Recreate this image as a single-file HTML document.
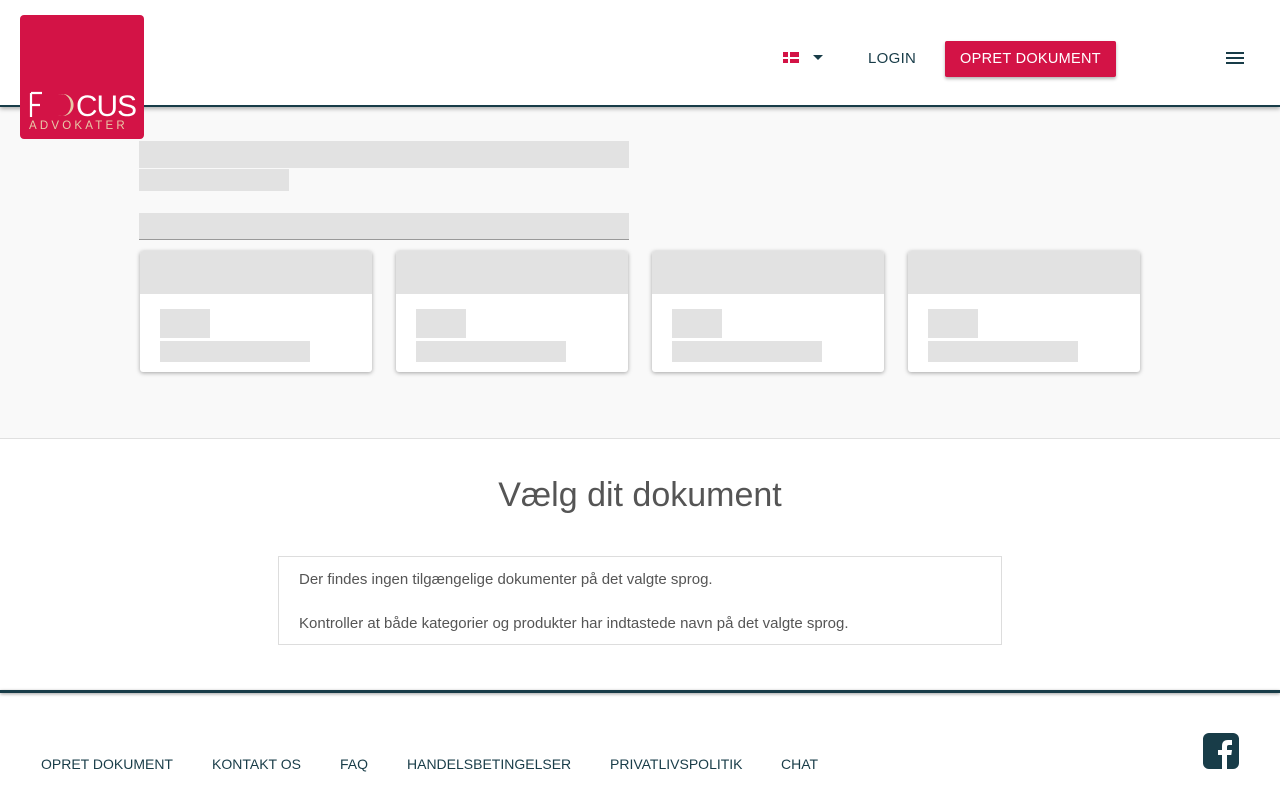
<!DOCTYPE html>
<html><head><meta charset="utf-8"><style>
*{margin:0;padding:0;box-sizing:border-box}
body{width:1280px;height:800px;overflow:hidden;background:#fff;font-family:"Liberation Sans",sans-serif;position:relative}
.hdr{position:absolute;left:0;top:0;width:1280px;height:107px;background:#fff;border-bottom:2px solid #183c48;box-shadow:0 2px 4px rgba(0,0,0,.3);z-index:2}
.logo{position:absolute;left:20px;top:15px;width:124px;height:124px;background:#d31346;border-radius:4px;z-index:3}
.logo .a{position:absolute;left:9px;top:106px;font-size:11.5px;color:#e8c9a8;letter-spacing:3.2px;line-height:1}
.gray{position:absolute;left:0;top:107px;width:1280px;height:332px;background:#f9f9f9;border-bottom:1px solid #e0e0e0}
.sk{position:absolute;background:#e2e2e2}
.card{position:absolute;top:251px;width:232px;height:121px;background:#fff;border-radius:3px;box-shadow:0 1px 4px rgba(0,0,0,.35);overflow:hidden}
.card .t{height:43px;background:#e2e2e2}
.card .b1{position:absolute;left:20px;top:58px;width:50px;height:29px;background:#e2e2e2}
.card .b2{position:absolute;left:20px;top:90px;width:150px;height:21px;background:#e2e2e2}
h1{position:absolute;top:476px;width:1280px;text-align:center;font-weight:400;font-size:34px;color:#555}
.box{position:absolute;left:278px;top:556px;width:724px;height:89px;border:1px solid #ddd;padding:12px 20px;font-size:15px;color:#555;line-height:22px}
.ft{position:absolute;left:0;top:690px;width:1280px;height:3px;background:#183c48;box-shadow:0 1px 3px rgba(0,0,0,.4)}
.fl{position:absolute;top:756px;font-size:14px;color:#183c48}
</style></head><body>
<div class="hdr">
 <div style="position:absolute;left:783px;top:52px;width:16px;height:11px;background:#d31346"><div style="position:absolute;left:5px;top:0;width:2px;height:11px;background:#fff"></div><div style="position:absolute;left:0;top:5px;width:16px;height:2px;background:#fff"></div></div>
 <div style="position:absolute;left:813px;top:55px;border-left:5px solid transparent;border-right:5px solid transparent;border-top:5px solid #183c48"></div>
 <div style="position:absolute;left:868px;top:50px;font-size:15px;color:#183c48;letter-spacing:.3px">LOGIN</div>
 <div style="position:absolute;left:945px;top:41px;width:171px;height:36px;background:#d31346;border-radius:2px;box-shadow:0 2px 3px rgba(0,0,0,.3);color:#fff;font-size:14.5px;letter-spacing:.3px;text-align:center;line-height:37px">OPRET DOKUMENT</div>
 <div style="position:absolute;left:1226px;top:52px;width:18px;height:2px;background:#183c48;box-shadow:0 5px 0 #183c48,0 10px 0 #183c48"></div>
</div>
<div class="logo">
<svg style="position:absolute;left:0;top:0" width="124" height="124" viewBox="0 0 124 124">
<path d="M11 78v24M11 78h11M11 90h9" stroke="#fff" stroke-width="2.2" fill="none"/>
<path d="M38 80a11 11 0 1 1 0 20a9 11 0 1 0 0-20z" fill="#e8c9a8"/>
<text x="56" y="101" font-family="Liberation Sans" font-size="30" fill="#fff" letter-spacing="-1" textLength="60" lengthAdjust="spacingAndGlyphs">CUS</text>
</svg>
<div class="a">ADVOKATER</div></div>
<div class="gray"></div>
<div class="sk" style="left:139px;top:141px;width:490px;height:27px"></div>
<div class="sk" style="left:139px;top:169px;width:150px;height:22px"></div>
<div class="sk" style="left:139px;top:213px;width:490px;height:27px;border-bottom:1px solid #999"></div>
<div class="card" style="left:140px"><div class="t"></div><div class="b1"></div><div class="b2"></div></div>
<div class="card" style="left:396px"><div class="t"></div><div class="b1"></div><div class="b2"></div></div>
<div class="card" style="left:652px"><div class="t"></div><div class="b1"></div><div class="b2"></div></div>
<div class="card" style="left:908px"><div class="t"></div><div class="b1"></div><div class="b2"></div></div>
<h1>Vælg dit dokument</h1>
<div class="box">Der findes ingen tilgængelige dokumenter på det valgte sprog.<br><br>Kontroller at både kategorier og produkter har indtastede navn på det valgte sprog.</div>
<div class="ft"></div>
<div class="fl" style="left:41px">OPRET DOKUMENT</div>
<div class="fl" style="left:212px">KONTAKT OS</div>
<div class="fl" style="left:340px">FAQ</div>
<div class="fl" style="left:407px">HANDELSBETINGELSER</div>
<div class="fl" style="left:610px">PRIVATLIVSPOLITIK</div>
<div class="fl" style="left:781px">CHAT</div>
<svg style="position:absolute;left:1203px;top:733px" width="36" height="36" viewBox="0 0 36 36"><rect width="36" height="36" rx="6" fill="#183c48"/><path d="M19 36V22h-4v-5h4v-4c0-4 2-6 6-6h4v5h-3c-1.5 0-2 .7-2 2v3h5l-.7 5H24v14z" fill="#fff"/></svg>
</body></html>
